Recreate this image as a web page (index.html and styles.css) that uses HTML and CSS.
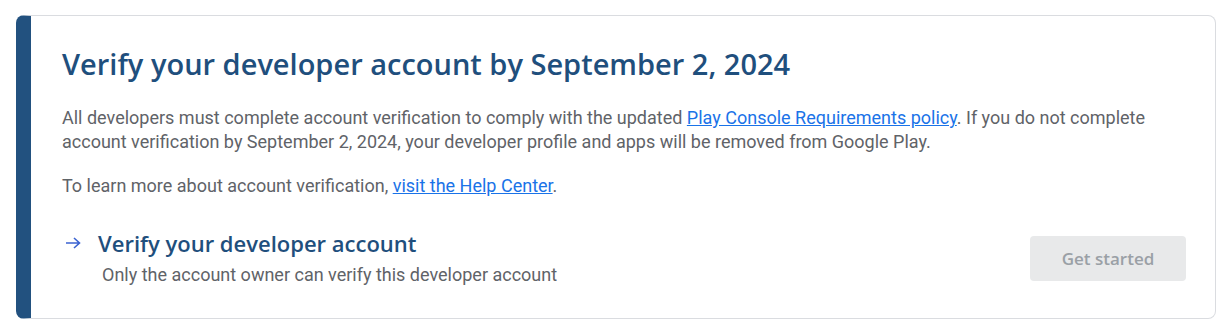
FILE: index.html
```html
<!DOCTYPE html>
<html lang="en">
<head>
  <meta charset="UTF-8">
  <meta name="viewport" content="width=device-width, initial-scale=1.0">
  <title>Verify your developer account</title>
  <link rel="stylesheet" href="styles.css">
</head>
<body>
  <div class="card">
    <h1>Verify your developer account by September 2, 2024</h1>
    <p>All developers must complete account verification to comply with the updated <a href="#">Play Console Requirements policy</a>. If you do not complete account verification by September 2, 2024, your developer profile and apps will be removed from Google Play.</p>
    <p>To learn more about account verification, <a href="#">visit the Help Center</a>.</p>

    <div class="task-row">
      <div class="task">
        <div class="task-title">
          <svg class="arrow" width="16" height="12" viewBox="0 0 16 12"><path d="M1 6h13.5M9 1l5.5 5-5.5 5" fill="none" stroke="#3b63d1" stroke-width="1.6"/></svg>
          <span>Verify your developer account</span>
        </div>
        <div class="task-note">Only the account owner can verify this developer account</div>
      </div>
      <button disabled>Get started</button>
    </div>
  </div>
</body>
</html>
```

FILE: styles.css
```css
body {
  margin: 0;
  padding: 15px 15px 0 16px;
  font-family: Roboto, Arial, sans-serif;
  background: #fff;
}
.card {
  box-sizing: border-box;
  width: 1200px;
  height: 304px;
  border: 1px solid #dadce0;
  border-left: 15px solid #22517f;
  border-radius: 8px;
  padding: 28px 30px 0 31px;
}
h1 {
  margin: 0 0 22px;
  font-family: "Open Sans", Roboto, sans-serif;
  font-weight: 600;
  font-size: 29px;
  line-height: 40px;
  color: #1f4f7d;
}
p {
  margin: 0 0 20px;
  font-size: 18px;
  line-height: 24px;
  color: #5f6368;
}
a {
  color: #1a73e8;
}
.task-row {
  display: flex;
  align-items: center;
  justify-content: space-between;
  margin-top: 31px;
}
.task-title {
  display: flex;
  align-items: center;
  gap: 17px;
  font-family: "Open Sans", Roboto, sans-serif;
  font-weight: 600;
  font-size: 22px;
  line-height: 28px;
  color: #1f4f7d;
}
.arrow {
  margin-left: 3px;
}
.task-note {
  margin: 6px 0 0 40px;
  font-size: 18px;
  line-height: 24px;
  color: #5f6368;
}
button {
  width: 156px;
  height: 45px;
  margin-right: -1px;
  border: none;
  border-radius: 4px;
  background: #e8e9ea;
  color: #9aa0a6;
  font-family: "Open Sans", Roboto, sans-serif;
  font-weight: 600;
  font-size: 17px;
}
```
